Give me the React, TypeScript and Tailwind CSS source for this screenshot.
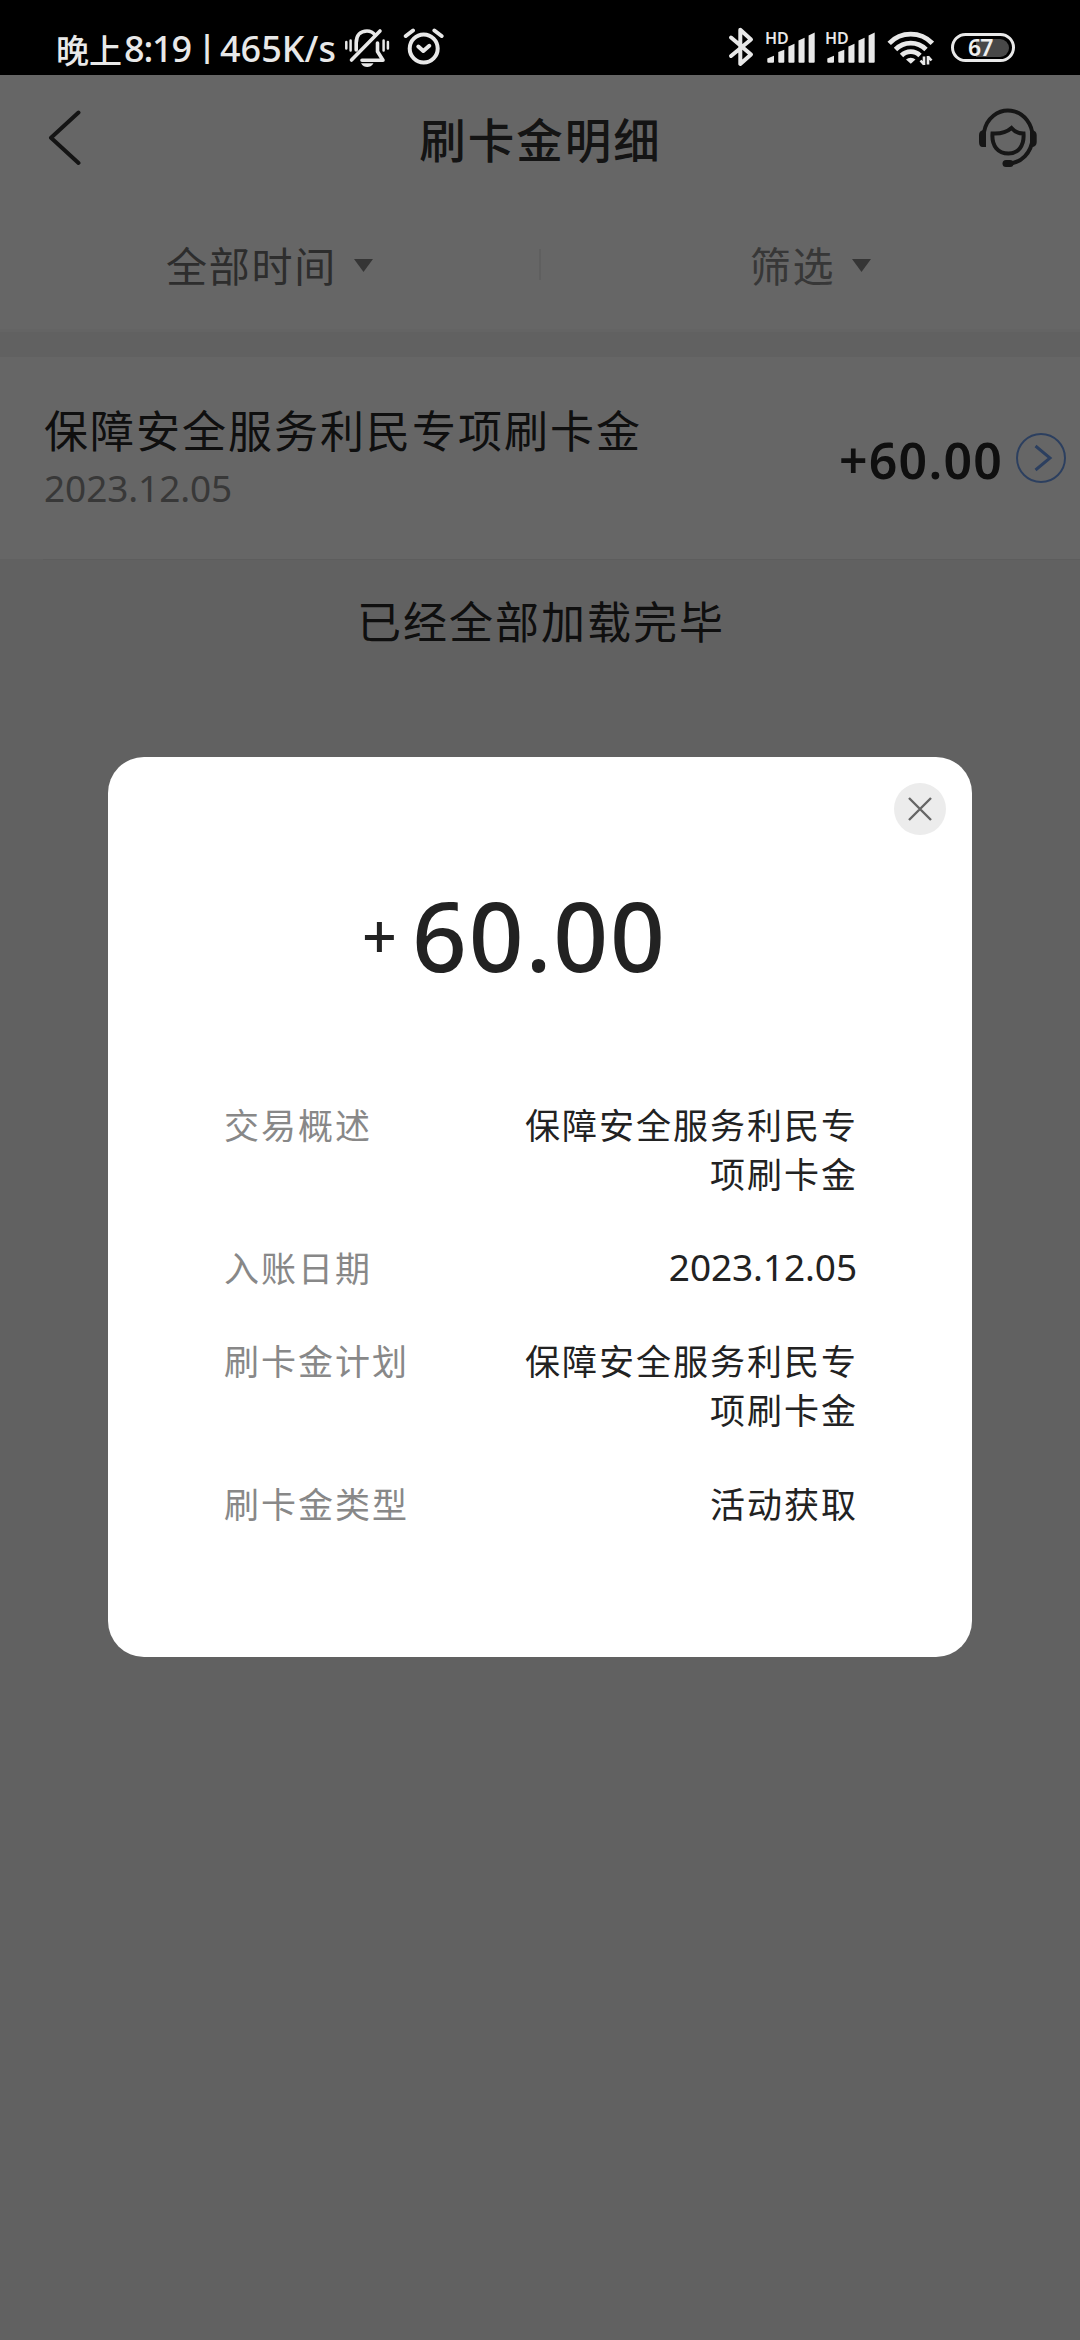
import React from "react";

function BellOffIcon() {
  return (
    <svg className="h-10 w-[46px]" viewBox="344 28 46 40" fill="none" stroke="#e8e8e8" strokeWidth="3.6" strokeLinecap="round">
      <path d="M356.200 50V43C356.200 35 360.500 31 367 31C370.500 31 373 32.300 375 35" />
      <path d="M351.500 60L380 31" />
      <path d="M362 60.200H383L377.500 51.500V43" strokeLinejoin="round" />
      <path d="M361 63.200H373.500C372 66 369.500 67 367.200 67S362.500 66 361 63.200Z" fill="#e8e8e8" stroke="none" />
      <path d="M346.300 42V48.500M350.600 40.500V50.500M383.600 40.500V50.500M387.900 42V48.500" strokeWidth="2.500" />
    </svg>
  );
}

function AlarmIcon() {
  return (
    <svg className="h-10 w-[42px]" viewBox="403 28 42 40" fill="none" stroke="#e8e8e8" strokeWidth="4" strokeLinecap="round">
      <circle cx="423.700" cy="48.500" r="14" />
      <path d="M418.300 46.500L423.300 51L429.300 45.800" strokeLinejoin="round" />
      <path d="M405.800 36L413 30.500M434.400 30.500L441.600 36" strokeWidth="4" />
    </svg>
  );
}

function BluetoothIcon() {
  return (
    <svg className="h-10 w-7" viewBox="727 27 28 40" fill="none" stroke="#e8e8e8" strokeWidth="4" strokeLinecap="round" strokeLinejoin="round">
      <path d="M731 37.500L751 54.500L740.300 64V29.800L751 39.500L731 56" />
    </svg>
  );
}

function Signal() {
  return (
    <div className="relative h-8 w-[50px]">
      <span className="absolute -top-[3px] left-0 font-['Noto_Sans'] text-[16px] leading-[20px] font-semibold text-[#e8e8e8]">HD</span>
      <svg className="h-8 w-[50px]" viewBox="765 31 50 32" fill="#e8e8e8">
        <path d="M767.300 58.500L774 55.700V61.700Q774 62.700 773 62.700H768.300Q767.300 62.700 767.300 61.700Z" />
        <path d="M778.300 52L784.300 49.700V61.700Q784.300 62.700 783.300 62.700H779.300Q778.300 62.700 778.300 61.700Z" />
        <path d="M788.400 46.500L794.500 43.700V61.700Q794.500 62.700 793.500 62.700H789.400Q788.400 62.700 788.400 61.700Z" />
        <path d="M798.500 40.500L804.600 37.700V61.700Q804.600 62.700 803.600 62.700H799.500Q798.500 62.700 798.500 61.700Z" />
        <path d="M808.600 35.500L814.700 32.500V61.700Q814.700 62.700 813.700 62.700H809.600Q808.600 62.700 808.600 61.700Z" />
      </svg>
    </div>
  );
}

function WifiIcon() {
  return (
    <svg className="h-[37px] w-[47px]" viewBox="887 30 47 37" fill="none" stroke="#e8e8e8" strokeWidth="4.800">
      <path d="M889.200 43.300A30 30 0 0 1 932.300 43.300" />
      <path d="M895.500 49.500A21.500 21.500 0 0 1 926 49.500" />
      <path d="M901.500 55.500A13 13 0 0 1 920 55.500" />
      <path d="M906 59.500A7 7 0 0 1 915.500 59.500L910.800 63.800Z" fill="#e8e8e8" stroke="none" />
      <path d="M924 65V56.500M920.500 60.500L924 64.500M928 56V64.500M928 56.500L931.500 60.500" strokeWidth="2.600" />
    </svg>
  );
}

function Battery() {
  return (
    <div className="relative flex h-[29px] w-[64px] items-center rounded-full border-[3px] border-[#e8e8e8]">
      <div className="ml-[22px] h-[18px] w-[33px] rounded-r-full bg-[#484848]" />
      <span className="absolute top-[-1px] left-[14px] font-['Noto_Sans'] text-[23px] leading-[24px] font-semibold tracking-[-1px] text-[#efefef]">67</span>
    </div>
  );
}

function StatusBar() {
  return (
    <div className="flex h-[75px] shrink-0 items-start bg-black text-[#e8e8e8]">
      <div className="flex w-[288px] items-center pt-[22px] pl-[56px] whitespace-nowrap">
        <span className="w-[68px] shrink-0 font-['Noto_Sans_CJK_SC'] text-[33px] leading-[52px] font-medium">晚上</span>
        <span className="w-[72px] shrink-0 font-['Noto_Sans'] text-[36px] leading-[52px] font-medium tracking-[-1.200px]">8:19</span>
        <span className="mb-[5px] w-[22px] shrink-0 text-center font-['Noto_Sans'] text-[30px] leading-[48px] font-bold">|</span>
        <span className="ml-[2px] shrink-0 font-['Noto_Sans'] text-[36px] leading-[52px] font-medium">465K/s</span>
      </div>
      <div className="flex pt-[28px] pl-[56px]">
        <BellOffIcon />
        <div className="w-[13px]" />
        <AlarmIcon />
      </div>
      <div className="ml-auto flex pr-[65px]">
        <div className="pt-[27px]"><BluetoothIcon /></div>
        <div className="pt-[31px] pl-[10px]"><Signal /></div>
        <div className="pt-[31px] pl-[10px]"><Signal /></div>
        <div className="pt-[30px] pl-[12px]"><WifiIcon /></div>
        <div className="pt-[33px] pl-[17px]"><Battery /></div>
      </div>
    </div>
  );
}

function ServiceIcon() {
  return (
    <svg className="h-[60px] w-[60px]" viewBox="978 108 60 60" fill="none" stroke="#373737" strokeWidth="4">
      <path d="M984 132A24.500 26.500 0 1 1 1008 163.500" />
      <path d="M986 130.500V147H982.500Q979 147 979 142V135Q979 130.500 984 130Z" fill="#373737" stroke="none" />
      <path d="M1030 130.500V147H1033Q1036.700 146 1036.700 142V135Q1036.700 131 1032 130Z" fill="#373737" stroke="none" />
      <path d="M992.500 133.500C1001 134 1007 132 1011.500 128C1014 131 1018 133.500 1023.500 133.500C1024.500 146 1018 153.500 1008.500 153.500C998 153.500 991.500 146 992.500 133.500Z" />
      <rect x="1002.500" y="160" width="11" height="7" rx="3.500" fill="#373737" stroke="none" />
    </svg>
  );
}

function Header() {
  return (
    <div className="flex h-[125px] shrink-0 items-center justify-between bg-white pr-[42px] pl-[48px]">
      <svg className="h-[56px] w-[54px]" viewBox="48 110 54 56" fill="none" stroke="#333" strokeWidth="4" strokeLinecap="round" strokeLinejoin="round">
        <path d="M78.500 112.500L51 137.800L78.500 163" />
      </svg>
      <h1 className="mt-px ml-px text-[46.500px] font-medium tracking-[2px] text-[#333]">刷卡金明细</h1>
      <ServiceIcon />
    </div>
  );
}

function Filter({ label, tone }: { label: string; tone: string }) {
  return (
    <div className={`flex h-full flex-1 items-center justify-center ${tone}`}>
      <span className="text-[41px] leading-[60px] tracking-[1.800px]">{label}</span>
      <svg className="mt-[3px] ml-[17px] h-[13px] w-[19px]" viewBox="0 0 19 13" fill="#858585">
        <path d="M0 0H19L9.500 13Z" />
      </svg>
    </div>
  );
}

const details = [
  { label: "交易概述", value: "保障安全服务利民专项刷卡金" },
  { label: "入账日期", value: "2023.12.05", numeric: true },
  { label: "刷卡金计划", value: "保障安全服务利民专项刷卡金" },
  { label: "刷卡金类型", value: "活动获取" },
];

function DetailModal() {
  return (
    <div className="relative h-[900px] w-[864px] rounded-[36px] bg-white pt-[128px]">
      <button className="absolute top-[26px] right-[26px] flex size-[52px] items-center justify-center rounded-full bg-[#ececec]">
        <svg className="size-6" viewBox="0 0 24 24" stroke="#666" strokeWidth="2.400">
          <path d="M1 1L23 23M23 1L1 23" />
        </svg>
      </button>
      <div className="flex h-[100px] items-center pl-[254px] font-['Noto_Sans'] text-[#222]">
        <span className="w-[50px] pt-[2px] text-[61px] leading-[100px] font-medium">+</span>
        <span className="text-[96px] leading-[100px] font-medium tracking-[1.800px]">60.00</span>
      </div>
      <div className="flex flex-col gap-[44.500px] pt-[114px] pr-[114px] pl-[116px] text-[35px] leading-[49px] tracking-[2px]">
        {details.map((d) => (
          <div key={d.label} className="flex justify-between">
            <span className="text-[#888]">{d.label}</span>
            {d.numeric ? (
              <span className="pr-px font-['Noto_Sans'] text-[37px] tracking-[-0.100px] text-[#222]">{d.value}</span>
            ) : (
              <span className="w-[336px] text-right text-[#222]">{d.value}</span>
            )}
          </div>
        ))}
      </div>
    </div>
  );
}

export default function App() {
  return (
    <div className="relative flex h-[2340px] w-[1080px] flex-col overflow-hidden bg-[#f3f3f3] font-['Noto_Sans_CJK_SC',sans-serif]">
      <StatusBar />
      <Header />
      <div className="flex h-[132px] shrink-0 items-center border-b-[3px] border-[#fafafa] bg-white">
        <Filter label="全部时间" tone="text-[#707070] pb-[2px]" />
        <div className="h-[31px] w-[2px] bg-[#eeeeee]" />
        <Filter label="筛选" tone="text-[#8a8a8a] pb-[2px]" />
      </div>
      <div className="mt-[25px] flex h-[202px] shrink-0 items-center bg-white pr-[14px] pl-[44px]">
        <div className="flex flex-1 flex-col">
          <span className="-mt-px mb-px text-[44px] leading-[58px] tracking-[2px] text-[#262626]">保障安全服务利民专项刷卡金</span>
          <span className="pt-px font-['Noto_Sans'] text-[37px] leading-[56px] tracking-[-0.100px] text-[#8c8c8c]">2023.12.05</span>
        </div>
        <span className="pt-[3px] font-['Noto_Sans'] text-[50px] leading-[60px] font-semibold tracking-[1.200px] text-[#262626]">+60.00</span>
        <svg className="ml-[13px] size-[50px]" viewBox="0 0 50 50" fill="none" stroke="#6f9fee">
          <circle cx="25" cy="25" r="24" strokeWidth="2" />
          <path d="M19.500 13L34 25L19.500 37" strokeWidth="3" />
        </svg>
      </div>
      <div className="ml-[43px] h-px shrink-0 bg-[#e8e8e8]" />
      <div className="pt-[31px] pl-[2px] text-center text-[44px] leading-[58px] tracking-[2px] text-[#262626]">已经全部加载完毕</div>
      <div className="absolute inset-x-0 top-[75px] bottom-0 flex justify-center bg-black/60 pt-[682px]">
        <DetailModal />
      </div>
    </div>
  );
}
